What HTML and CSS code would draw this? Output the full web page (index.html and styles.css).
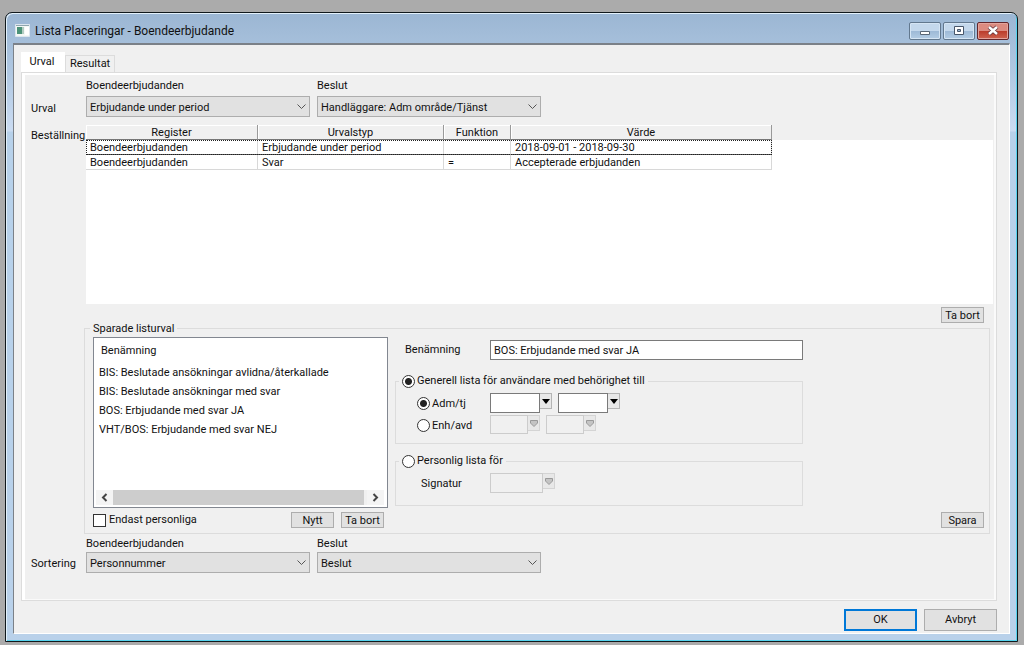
FILE: index.html
```html
<!DOCTYPE html>
<html lang="sv">
<head>
<meta charset="utf-8">
<title>Lista Placeringar - Boendeerbjudande</title>
<link rel="stylesheet" href="styles.css">
</head>
<body>
<svg class="defs" aria-hidden="true">
  <symbol id="chevron" viewBox="0 0 9 5"><path d="M.5.5l4 4 4-4" fill="none" stroke="#555"/></symbol>
  <symbol id="drop" viewBox="0 0 8 5"><path d="M0 0h8L4 5z"/></symbol>
  <symbol id="drop-off" viewBox="0 0 8 7"><path d="M.5.5h7V3L4 6.5.5 3z" fill="#c4c4c4" stroke="#999"/></symbol>
</svg>
<div class="window">
  <header class="titlebar">
    <svg class="app-icon" width="15" height="13" viewBox="0 0 15 13"><path d="M.5.5h14v12H.5z" fill="#f4f7f5" stroke="#dce6ef"/><path d="M2 3h5v7H2z" fill="#4c9279"/><path d="M7 3h2v7H7z" fill="#b4cdc3"/><path d="M10 3h4v8h-4z" fill="#fff"/><path d="M1 1.500h13" stroke="#8fa5ae"/></svg>
    <h1 class="title">Lista Placeringar - Boendeerbjudande</h1>
    <button class="caption" aria-label="Minimera"><svg width="12" height="12" viewBox="0 0 12 12"><path d="M1.500 6.500h9v3h-9z" fill="#fff" stroke="#596675"/></svg></button>
    <button class="caption" aria-label="Maximera"><svg width="12" height="12" viewBox="0 0 12 12"><path d="M1.500 1.500h9v8h-9z" fill="#fff" stroke="#48566a"/><path d="M4.500 4.500h3v2h-3z" fill="#9bb7d3" stroke="#48566a"/></svg></button>
    <button class="caption close" aria-label="Stäng"><svg width="12" height="12" viewBox="0 0 12 12"><path d="M2 2l8 7M10 2l-8 7" stroke="#603038" stroke-width="4"/><path d="M2 2l8 7M10 2l-8 7" stroke="#fff" stroke-width="2.500"/></svg></button>
  </header>
  <main class="client">
    <div class="tabs" role="tablist">
      <button class="tab active" role="tab" aria-selected="true">Urval</button>
      <button class="tab" role="tab" aria-selected="false">Resultat</button>
    </div>
    <section class="panel">
      <div class="row">
        <span class="side side-select">Urval</span>
        <div class="picks upper">
          <div class="pick"><label for="u1">Boendeerbjudanden</label><div class="select"><select id="u1"><option>Erbjudande under period</option></select><svg><use href="#chevron"/></svg></div></div>
          <div class="pick"><label for="u2">Beslut</label><div class="select"><select id="u2"><option>Handläggare: Adm område/Tjänst</option></select><svg><use href="#chevron"/></svg></div></div>
        </div>
      </div>
      <div class="row orders">
        <span class="side side-table">Beställning</span>
        <div class="sheet">
          <table>
            <colgroup><col class="c-register"><col class="c-type"><col class="c-function"><col class="c-value"></colgroup>
            <thead><tr><th>Register</th><th>Urvalstyp</th><th>Funktion</th><th>Värde</th></tr></thead>
            <tbody>
              <tr class="current"><td>Boendeerbjudanden</td><td>Erbjudande under period</td><td></td><td>2018-09-01 - 2018-09-30</td></tr>
              <tr><td>Boendeerbjudanden</td><td>Svar</td><td>=</td><td>Accepterade erbjudanden</td></tr>
            </tbody>
          </table>
        </div>
      </div>
      <div class="remove"><button class="btn small">Ta bort</button></div>
      <fieldset class="saved">
        <legend>Sparade listurval</legend>
        <div class="saved-body">
          <div class="left">
            <div class="listbox">
              <div class="list-head">Benämning</div>
              <ul>
                <li>BIS: Beslutade ansökningar avlidna/återkallade</li>
                <li>BIS: Beslutade ansökningar med svar</li>
                <li>BOS: Erbjudande med svar JA</li>
                <li>VHT/BOS: Erbjudande med svar NEJ</li>
              </ul>
              <div class="scroll">
                <button class="arrow" aria-label="Vänster"><svg width="7" height="9" viewBox="0 0 7 9"><path d="M5.500 1L2 4.500 5.500 8" fill="none" stroke="#444" stroke-width="2"/></svg></button>
                <div class="thumb"></div>
                <button class="arrow" aria-label="Höger"><svg width="7" height="9" viewBox="0 0 7 9"><path d="M1.500 1L5 4.500 1.500 8" fill="none" stroke="#444" stroke-width="2"/></svg></button>
              </div>
            </div>
            <div class="list-actions">
              <label class="check"><input type="checkbox">Endast personliga</label>
              <button class="btn small">Nytt</button>
              <button class="btn small">Ta bort</button>
            </div>
          </div>
          <div class="right">
            <div class="name"><label for="name">Benämning</label><input id="name" type="text" value="BOS: Erbjudande med svar JA"></div>
            <fieldset class="group general">
              <legend><label class="radio"><input type="radio" name="scope" checked>Generell lista för användare med behörighet till</label></legend>
              <div class="line">
                <label class="radio lead"><input type="radio" name="unit" checked>Adm/tj</label>
                <div class="combo"><input type="text" aria-label="Adm"><button aria-label="Välj adm"><svg width="8" height="5"><use href="#drop"/></svg></button></div>
                <div class="combo"><input type="text" aria-label="Tjänst"><button aria-label="Välj tjänst"><svg width="8" height="5"><use href="#drop"/></svg></button></div>
              </div>
              <div class="line">
                <label class="radio lead"><input type="radio" name="unit">Enh/avd</label>
                <div class="combo short"><input type="text" aria-label="Enhet" disabled><button aria-label="Välj enhet" disabled><svg width="8" height="7"><use href="#drop-off"/></svg></button></div>
                <div class="combo short"><input type="text" aria-label="Avdelning" disabled><button aria-label="Välj avdelning" disabled><svg width="8" height="7"><use href="#drop-off"/></svg></button></div>
              </div>
            </fieldset>
            <fieldset class="group personal">
              <legend><label class="radio"><input type="radio" name="scope">Personlig lista för</label></legend>
              <div class="line">
                <label class="lead sign" for="sign">Signatur</label>
                <div class="combo long"><input id="sign" type="text" disabled><button aria-label="Välj signatur" disabled><svg width="8" height="7"><use href="#drop-off"/></svg></button></div>
              </div>
            </fieldset>
          </div>
          <button class="btn small save">Spara</button>
        </div>
      </fieldset>
      <div class="row">
        <span class="side side-sort">Sortering</span>
        <div class="picks lower">
          <div class="pick"><label for="s1">Boendeerbjudanden</label><div class="select"><select id="s1"><option>Personnummer</option></select><svg><use href="#chevron"/></svg></div></div>
          <div class="pick"><label for="s2">Beslut</label><div class="select"><select id="s2"><option>Beslut</option></select><svg><use href="#chevron"/></svg></div></div>
        </div>
      </div>
    </section>
    <footer class="footer">
      <button class="btn large default">OK</button>
      <button class="btn large">Avbryt</button>
    </footer>
  </main>
</div>
</body>
</html>
```
FILE: styles.css
```css
* { box-sizing: border-box; }

body {
  margin: 0;
  min-height: 100vh;
  display: flex;
  padding: 12px 6px 3px 5px;
  background: #ababab;
  color: #111;
  font: 11px/14px Roboto, "Liberation Sans", sans-serif;
}

button, input, select { font: inherit; color: inherit; margin: 0; border-radius: 0; }
.defs { position: absolute; width: 0; height: 0; }

.window {
  flex: 1;
  display: flex;
  flex-direction: column;
  min-width: 0;
  padding: 0 7px 7px;
  border: 1px solid #10181c;
  border-radius: 7px 7px 0 0;
  background: linear-gradient(#9bb6d3, #b0c8e2 60px, #cbdcf2 118px, #b7d1ea 119px, #b9d1ea);
  box-shadow: inset 1px 1px #e3f1fb, inset -1px -1px #56d3ee;
}

.titlebar { display: flex; align-items: center; gap: 2px; height: 30px; padding: 5px 1px 0 2px; }
.app-icon { margin-right: 3px; }
.title { flex: 1; margin: 0; font: 12px/18px Roboto, "Open Sans", sans-serif; }
.caption {
  display: grid;
  place-items: center;
  width: 32px;
  height: 18px;
  padding: 0;
  border: 1px solid #62788e;
  border-radius: 2px;
  background: linear-gradient(#c4d8ec 50%, #9db9d6 50%, #b3cce4);
  box-shadow: inset 0 0 0 1px #d5e5f4;
}
.caption.close {
  border-color: #63262b;
  background: linear-gradient(#dc8b80 50%, #bb3b2a 50%, #cf6350);
  box-shadow: inset 0 0 0 1px #e3a49c;
}

.client {
  flex: 1;
  display: flex;
  flex-direction: column;
  padding: 8px 12px 2px 7px;
  border: 1px solid #fff;
  border-top: 2px solid #7b8188;
  border-left-color: #7b8188;
  background: #f0f0f0;
}

.tabs { display: flex; align-items: flex-end; height: 19px; }
.tab { height: 17px; padding: 0 4px; border: 1px solid #dcdcdc; border-bottom: 0; background: #f0f0f0; }
.tab.active { height: 20px; width: 44px; padding: 0 6px 1px 4px; border-color: #fff; background: #fff; }

.panel {
  flex: 1;
  display: flex;
  flex-direction: column;
  padding: 6px 3px 27px 5px;
  border: 1px solid #dcdcdc;
  box-shadow: inset 3px 2px #fff, inset -2px -1px #fafafa;
}
.row { display: flex; padding-left: 4px; }
.side { width: 55px; flex: none; }
.side-select { padding-top: 23px; }
.side-table { padding-top: 4px; }
.side-sort { padding-top: 20px; }
.picks { display: flex; gap: 7px; }
.pick { display: flex; flex-direction: column; width: 224px; }
.upper .pick { gap: 3px; }
.lower .pick { gap: 1px; }
.select { position: relative; height: 21px; }
.select select { appearance: none; width: 100%; height: 100%; padding: 2px 20px 0 3px; border: 1px solid #adadad; background: #e1e1e1; }
.select svg { position: absolute; right: 4px; top: 8px; width: 9px; height: 5px; pointer-events: none; }

.orders { flex: 1; margin-top: 8px; }
.sheet { flex: 1; background: linear-gradient(#f0f0f0 15px, #fff 15px); }
table { table-layout: fixed; width: 686px; border-collapse: separate; border-spacing: 0; line-height: 13px; }
.c-register { width: 172px; }
.c-type { width: 186px; }
.c-function { width: 67px; }
.c-value { width: 261px; }
th { height: 15px; padding: 1px 0 0; font-weight: 400; border-right: 1px solid #999; border-bottom: 1px solid #777; box-shadow: inset 1px 1px #fff; }
td { height: 15px; padding: 1px 4px 0; border-right: 1px solid #d8d8d8; border-bottom: 1px solid #d8d8d8; }
.current td { border-bottom: 1px solid #555; }
.current { outline: 1px dotted #222; outline-offset: -1px; }

.btn { padding: 0; border: 1px solid #adadad; background: #e1e1e1; text-align: center; }
.small { width: 43px; height: 16px; padding-top: 1px; line-height: 13px; }
.large { width: 73px; height: 22px; }
.default { border: 2px solid #0078d7; }
.remove { display: flex; justify-content: flex-end; padding: 3px 9px 0 0; height: 19px; }

fieldset { min-width: 0; margin: 0; padding: 0; border: 1px solid #dcdcdc; }
legend { padding: 0 3px; }
.saved { margin: 0 3px 3px 57px; padding: 3px 5px 5px 8px; }
.saved > legend { margin-left: -3px; line-height: 11px; }
.saved-body { display: flex; gap: 7px; }
.left { width: 295px; flex: none; }
.listbox { height: 171px; display: flex; flex-direction: column; padding: 6px 3px 2px 5px; border: 1px solid #828790; background: #fff; }
.list-head { padding-left: 2px; }
ul { flex: 1; margin: 5px 0 0; padding: 0; list-style: none; line-height: 19px; }
.scroll { display: flex; height: 15px; margin-left: -3px; background: #f0f0f0; }
.arrow { display: grid; place-items: center; width: 17px; padding: 0; border: 0; background: #f4f4f4; }
.thumb { flex: 1; margin-right: 3px; background: #cdcdcd; }
.list-actions { display: flex; gap: 7px; margin-top: 4px; padding-right: 4px; }
.check { flex: 1; display: flex; align-items: center; gap: 3px; }
.check input { appearance: none; width: 13px; height: 13px; border: 1px solid #333; background: #fff; }

.right { width: 408px; flex: none; padding-top: 3px; }
.name { display: flex; align-items: center; padding-left: 10px; }
.name label { width: 85px; }
.name input { flex: 1; min-width: 0; height: 20px; padding: 0 3px; border: 1px solid #7a7a7a; background: #fff; }
.group legend { margin-left: -18px; }
.radio { display: flex; align-items: center; gap: 2px; height: 14px; }
.radio input { appearance: none; width: 13px; height: 13px; border: 1px solid #333; border-radius: 50%; background: #fff; }
.radio input:checked { background: radial-gradient(circle, #222 3px, #fff 4px); }
.general { margin-top: 14px; padding: 5px 0 7px 21px; }
.personal { margin-top: 10px; padding: 5px 0 11px 21px; }
.line { display: flex; gap: 6px; }
.line + .line { margin-top: 1px; }
.lead { width: 67px; height: 21px; }
.sign { padding: 4px 0 0 4px; }
.combo { display: flex; align-items: flex-start; }
.combo input { width: 50px; height: 20px; padding: 0 3px; border: 1px solid #7a7a7a; background: #fff; }
.combo button { display: grid; place-items: center; width: 12px; height: 16px; padding: 0; border: 1px solid #b4b4b4; border-left: 0; background: #e8e8e8; }
.combo.short input { width: 38px; height: 19px; }
.combo.long input { width: 53px; }
.combo input:disabled { border-color: #ccc; background: #f0f0f0; }
.combo button:disabled { border-color: #d4d4d4; }
.save { align-self: flex-end; margin-left: auto; }

.footer { display: flex; justify-content: flex-end; gap: 7px; padding-top: 8px; }
```
